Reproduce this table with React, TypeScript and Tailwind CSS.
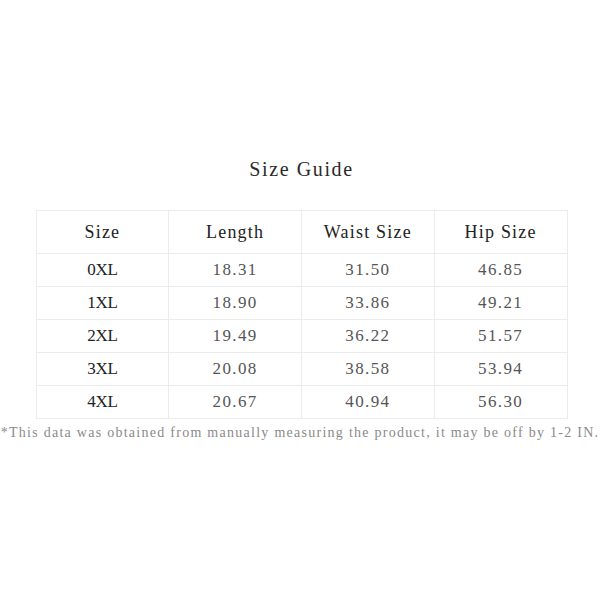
import React from "react";

const rows = [
  ["0XL", "18.31", "31.50", "46.85"],
  ["1XL", "18.90", "33.86", "49.21"],
  ["2XL", "19.49", "36.22", "51.57"],
  ["3XL", "20.08", "38.58", "53.94"],
  ["4XL", "20.67", "40.94", "56.30"],
];

const headers = ["Size", "Length", "Waist Size", "Hip Size"];

export default function App() {
  return (
    <div
      className="w-[600px] h-[600px] bg-white flex flex-col items-center pt-[155px] overflow-hidden"
      style={{ fontFamily: '"Liberation Serif", "Noto Sans CJK SC", serif' }}
    >
      <div className="ml-[3px] text-[20px] leading-[28px] tracking-[1.6px] text-[#2a2a2a]">Size Guide</div>
      <div className="mt-[27px] ml-[3px] w-[532px] grid grid-cols-4 border-l border-t border-[#ececec]">
        {headers.map((h) => (
          <div
            key={h}
            className="h-[43px] flex items-center justify-center border-r border-b border-[#ececec] text-[18px] tracking-[1.2px] text-[#222]"
          >
            {h}
          </div>
        ))}
        {rows.map((r) =>
          r.map((c, i) => (
            <div
              key={r[0] + i}
              className={
                "h-[33px] flex items-center justify-center border-r border-b border-[#ececec] text-[17px] " +
                (i === 0 ? "text-[#222] tracking-[-0.3px]" : "text-[#555] tracking-[1.4px]")
              }
            >
              {c}
            </div>
          ))
        )}
      </div>
      <div className="mt-[4px] leading-[20px] whitespace-nowrap text-[14px] tracking-[1.27px] text-[#8a8a8a]">
        *This data was obtained from manually measuring the product, it may be off by 1-2 IN.
      </div>
    </div>
  );
}
